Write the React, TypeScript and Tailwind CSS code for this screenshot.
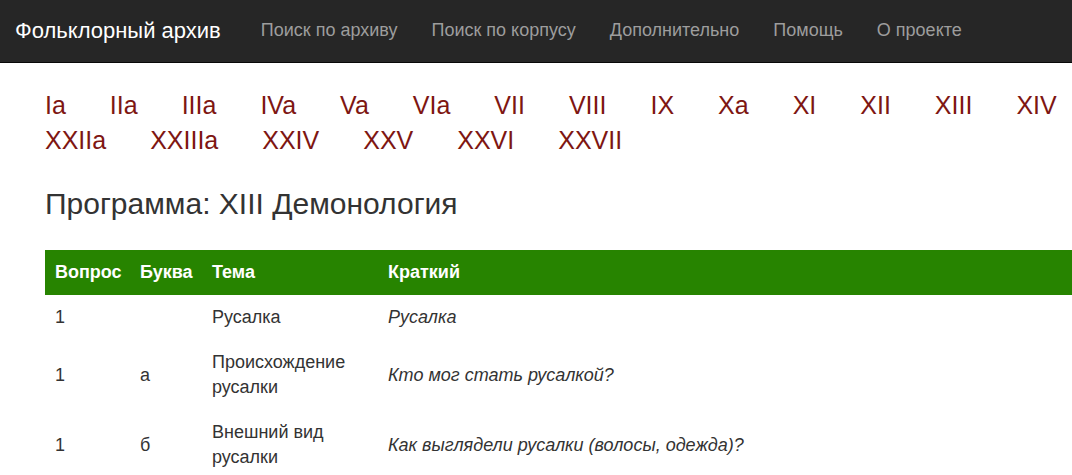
const menu = ["Поиск по архиву", "Поиск по корпусу", "Дополнительно", "Помощь", "О проекте"];

const sections = [
  "Ia", "IIa", "IIIa", "IVa", "Va", "VIa", "VII", "VIII", "IX", "Xa", "XI", "XII", "XIII", "XIV",
  "XXIIa", "XXIIIa", "XXIV", "XXV", "XXVI", "XXVII",
];

type Question = { number: number; letter: string; topic: string; summary: string };

const questions: Question[] = [
  { number: 1, letter: "", topic: "Русалка", summary: "Русалка" },
  { number: 1, letter: "а", topic: "Происхождение русалки", summary: "Кто мог стать русалкой?" },
  { number: 1, letter: "б", topic: "Внешний вид русалки", summary: "Как выглядели русалки (волосы, одежда)?" },
];

function Navbar() {
  return (
    <header className="flex flex-wrap items-center gap-x-10 border-b border-[#080808] bg-[#262626] px-[15px]">
      <a href="#" className="py-4 text-[22px] leading-[30px] text-white">
        Фольклорный архив
      </a>
      <nav>
        <ul className="flex flex-wrap gap-x-[34px]">
          {menu.map((item) => (
            <li key={item}>
              <a href="#" className="block pt-[15px] pb-[17px] text-[18px] leading-[30px] text-[#9d9d9d] hover:text-white">
                {item}
              </a>
            </li>
          ))}
        </ul>
      </nav>
    </header>
  );
}

function QuestionTable() {
  return (
    <table className="w-full table-fixed text-left text-[18px] leading-[25px]">
      <colgroup>
        <col className="w-[85px]" />
        <col className="w-[72px]" />
        <col className="w-[176px]" />
        <col />
      </colgroup>
      <thead className="bg-[#278400] text-white">
        <tr>
          {["Вопрос", "Буква", "Тема", "Краткий"].map((title) => (
            <th key={title} scope="col" className="py-2.5 pl-2.5 font-bold">
              {title}
            </th>
          ))}
        </tr>
      </thead>
      <tbody>
        {questions.map((q) => (
          <tr key={q.number + q.letter}>
            <td className="p-2.5">{q.number}</td>
            <td className="p-2.5">{q.letter}</td>
            <td className="p-2.5">{q.topic}</td>
            <td className="p-2.5 italic">{q.summary}</td>
          </tr>
        ))}
      </tbody>
    </table>
  );
}

export default function App() {
  return (
    <div className="overflow-x-hidden bg-white font-['Liberation_Sans',Arial,sans-serif] text-[#333333]">
      <Navbar />
      <main className="pt-[25px] pl-[45px]">
        <nav aria-label="Разделы программы">
          <ul className="flex flex-wrap gap-x-11 text-[25px] leading-[35px] text-[#7e1612]">
            {sections.map((section) => (
              <li key={section}>
                <a href="#" className="hover:underline">
                  {section}
                </a>
              </li>
            ))}
          </ul>
        </nav>
        <h1 className="mt-7 mb-7 text-[30px] leading-9">Программа: XIII Демонология</h1>
        <QuestionTable />
      </main>
    </div>
  );
}
